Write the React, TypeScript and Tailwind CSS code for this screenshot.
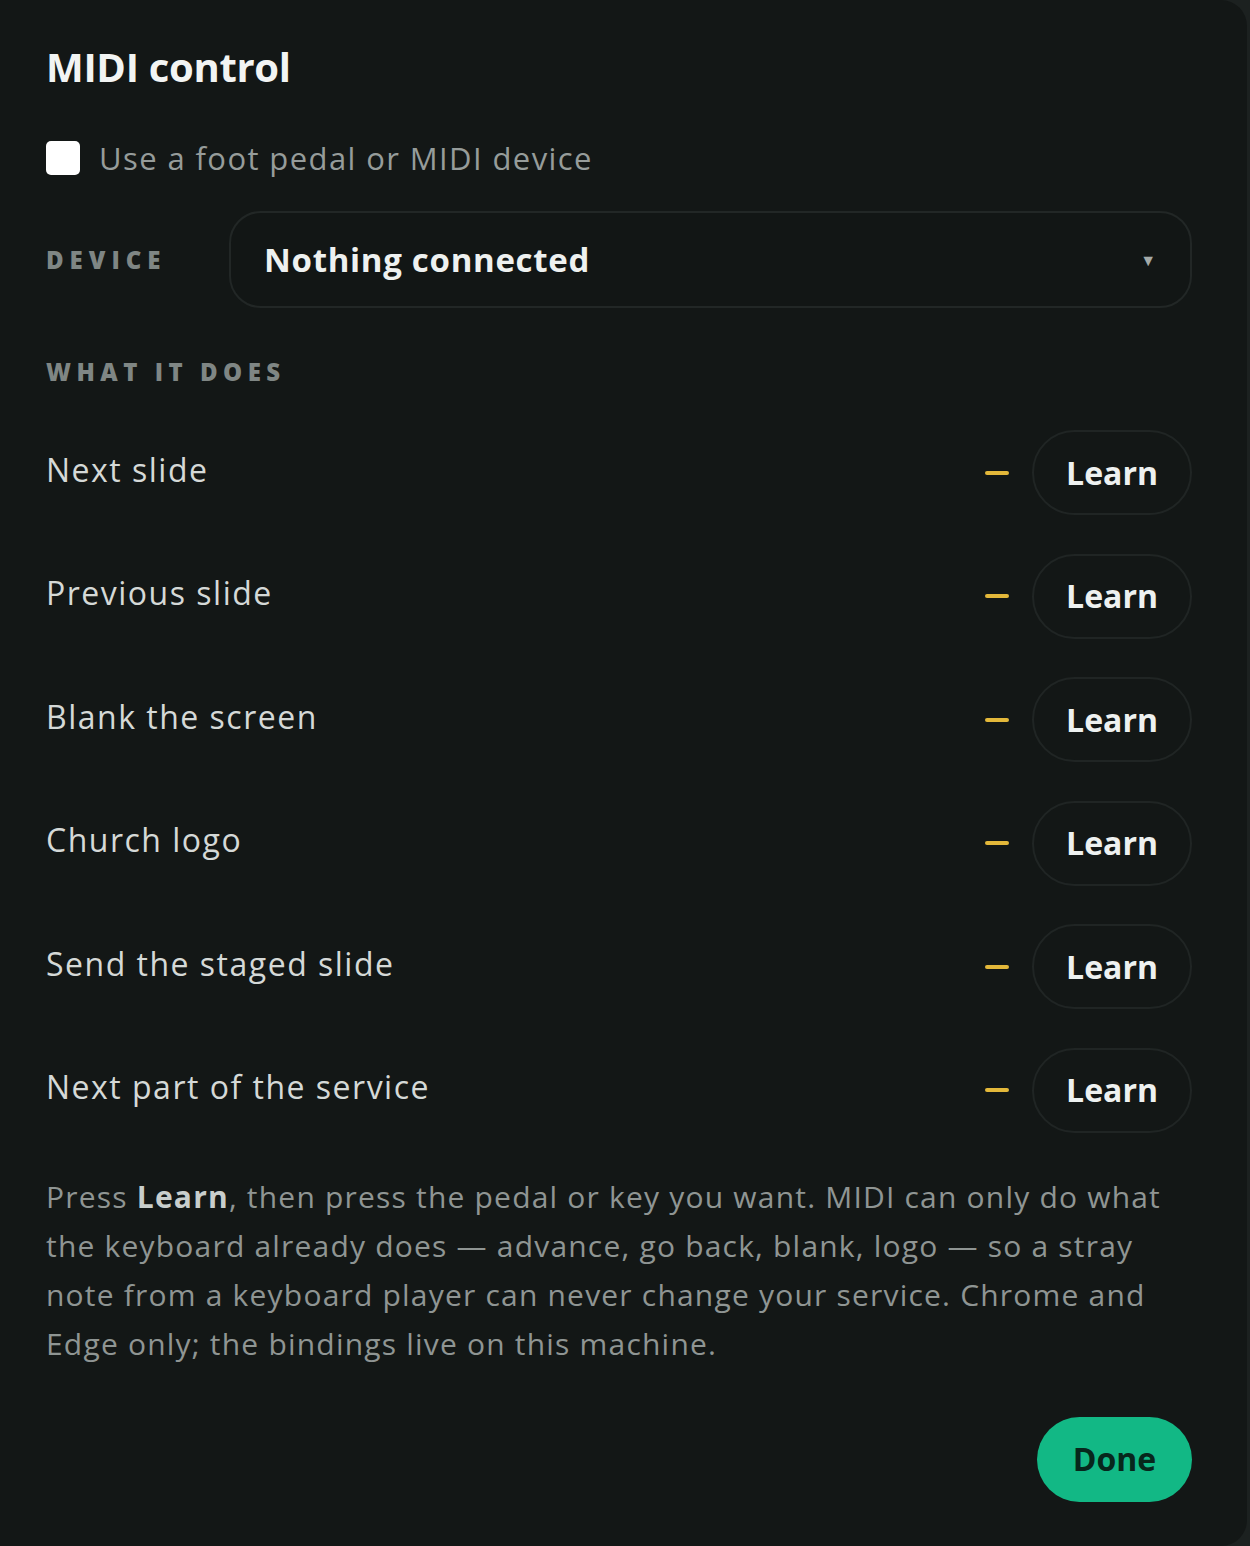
import React from "react";

const actions = [
  "Next slide",
  "Previous slide",
  "Blank the screen",
  "Church logo",
  "Send the staged slide",
  "Next part of the service",
];

export default function App() {
  return (
    <div className="min-h-[1546px] w-[1250px] bg-[#1c2120] font-['Open_Sans',sans-serif]">
      <div className="flex min-h-[1546px] w-[1247px] flex-col rounded-r-[26px] bg-[#131716] pl-[46px] pr-[55px] pt-[40px]">
        {/* Header */}
        <h1 className="text-[40px] font-bold leading-[54px] tracking-[-0.3px] text-[#f2f4f3]">MIDI control</h1>

        {/* Enable toggle */}
        <label className="mt-[44px] flex items-center gap-[19px]">
          <span className="h-[34px] w-[34px] rounded-[5px] bg-white" />
          <span className="text-[31px] leading-[40px] tracking-[1.4px] text-[#969c9a]">Use a foot pedal or MIDI device</span>
        </label>

        {/* Device select */}
        <div className="mt-[33px] flex items-center">
          <span className="w-[183px] text-[24px] font-extrabold tracking-[6px] text-[#7f8684]">DEVICE</span>
          <div className="flex h-[97px] flex-1 items-center justify-between rounded-[32px] border-2 border-[#222726] bg-[#121615] pl-[33px] pr-[34px]">
            <span className="text-[33px] font-bold tracking-[0.7px] text-[#eef1f0]">Nothing connected</span>
            <span className="text-[16px] text-[#a4aaa8]">▼</span>
          </div>
        </div>

        {/* Bindings */}
        <h2 className="mt-[46px] text-[24px] font-extrabold tracking-[5.5px] text-[#7f8684]">WHAT IT DOES</h2>

        <div className="mt-[40px] flex flex-col gap-[38.5px]">
          {actions.map((a) => (
            <div key={a} className="flex h-[85px] items-center justify-between">
              <span className="-mt-[6px] text-[32px] tracking-[1.5px] text-[#d5d9d7]">{a}</span>
              <div className="flex items-center gap-[23px]">
                <span className="h-[4px] w-[24px] rounded-full bg-[#e3b83a]" />
                <button className="h-[85px] w-[160px] rounded-full border-2 border-[#202524] text-[32px] font-bold text-[#eef1f0]">
                  Learn
                </button>
              </div>
            </div>
          ))}
        </div>

        <p className="-mr-[12px] mt-[39px] text-[30px] leading-[49px] tracking-[1.2px] text-[#8f9593]">
          Press <b className="font-bold text-[#c9cecc]">Learn</b>, then press the pedal or key you want. MIDI can only do what
          <br />
          the keyboard already does — advance, go back, blank, logo — so a stray
          <br />
          note from a keyboard player can never change your service. Chrome and
          <br />
          Edge only; the bindings live on this machine.
        </p>

        <div className="mt-[49px] flex justify-end">
          <button className="h-[85px] w-[155px] rounded-full bg-[#12b885] text-[32px] font-bold text-[#07271c]">Done</button>
        </div>
      </div>
    </div>
  );
}
